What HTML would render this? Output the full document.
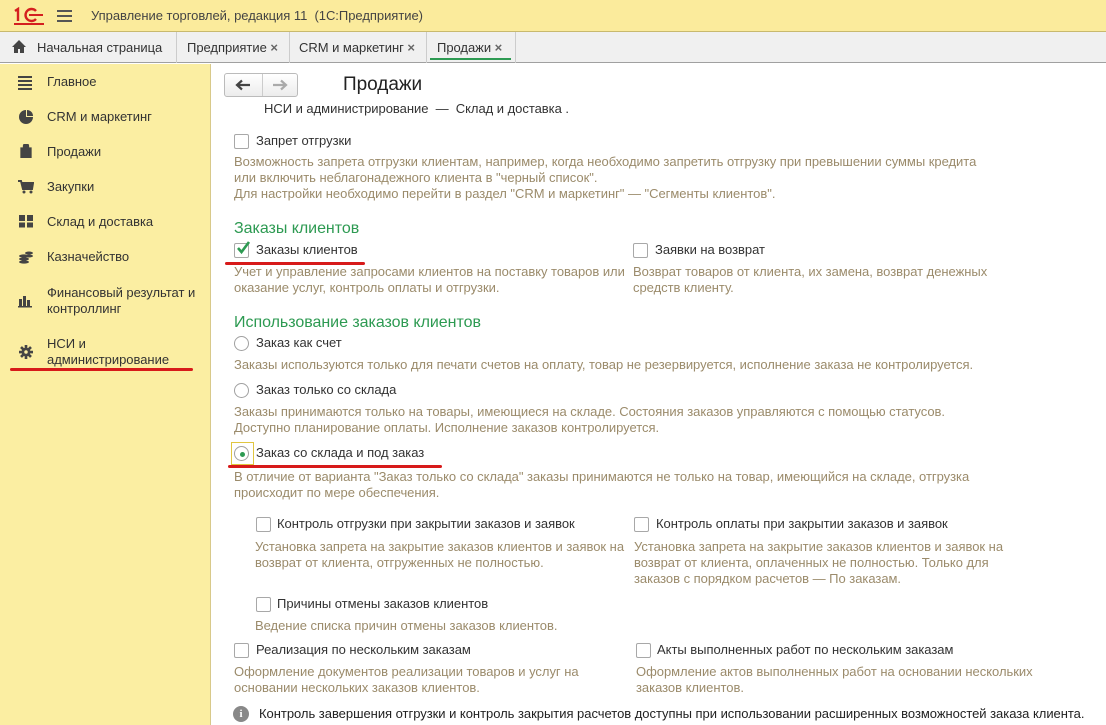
<!DOCTYPE html>
<html><head><meta charset="utf-8"><style>
*{margin:0;padding:0;box-sizing:border-box}
body{width:1106px;height:725px;overflow:hidden;position:relative;font-family:"Liberation Sans",Arial,sans-serif;font-size:13px;color:#333;background:#fff}
.a{position:absolute;white-space:nowrap;line-height:16px;letter-spacing:-0.03px}
.d{color:#9b8b6b}
.h{color:#2d9a52;font-size:16px;line-height:18px}
.cb{position:absolute;width:15px;height:15px;border:1px solid #a8a8a8;border-radius:2px;background:#fff}
.rb{position:absolute;width:15px;height:15px;border:1px solid #a0a0a0;border-radius:50%;background:#fff}
.red{position:absolute;height:3px;background:#d71a1a;border-radius:2px}
.si{position:absolute;left:18px;width:16px;height:14px}
</style></head><body>
<div style="position:absolute;left:0;top:0;width:1106px;height:32px;background:#fbeb9c;border-bottom:1px solid #c8b96e"></div>
<svg style="position:absolute;left:13px;top:7px" width="32" height="20" viewBox="0 0 32 20"><path d="M2 4l3-2v12" fill="none" stroke="#d41f1f" stroke-width="2.4"/><path d="M23 4a6 6 0 1 0 0 8" fill="none" stroke="#d41f1f" stroke-width="2.4"/><path d="M16 8h14" stroke="#d41f1f" stroke-width="2"/><path d="M1 17h30" stroke="#d41f1f" stroke-width="2"/></svg>
<div style="position:absolute;left:57px;top:10px;width:15px;height:2px;background:#555;box-shadow:0 5px 0 #555,0 10px 0 #555"></div>
<div class="a" style="left:91px;top:8px;color:#444">Управление торговлей, редакция 11&nbsp; (1С:Предприятие)</div>
<div style="position:absolute;left:0;top:32px;width:1106px;height:31px;background:#f0f0f0;border-bottom:1px solid #a0a0a0"></div>
<svg style="position:absolute;left:12px;top:40px" width="14" height="13" viewBox="0 0 14 13"><path d="M7 0L0 7h2v6h4V9h2v4h4V7h2z" fill="#444"/></svg>
<div class="a" style="left:37px;top:40px">Начальная страница</div>
<div style="position:absolute;left:176px;top:32px;width:1px;height:31px;background:#ccc"></div>
<div class="a" style="left:187px;top:40px">Предприятие <b style="color:#666">×</b></div>
<div style="position:absolute;left:289px;top:32px;width:1px;height:31px;background:#ccc"></div>
<div class="a" style="left:299px;top:40px">CRM и маркетинг <b style="color:#666">×</b></div>
<div style="position:absolute;left:426px;top:32px;width:1px;height:31px;background:#ccc"></div>
<div class="a" style="left:437px;top:40px">Продажи <b style="color:#666">×</b></div>
<div style="position:absolute;left:430px;top:58px;width:81px;height:2px;background:#2d9a52"></div>
<div style="position:absolute;left:515px;top:32px;width:1px;height:31px;background:#ccc"></div>
<div style="position:absolute;left:0;top:64px;width:211px;height:661px;background:#fbeea2;border-right:1px solid #d8c98a"></div>
<div style="position:absolute;left:18px;top:76px;width:14px;height:2px;background:#444;box-shadow:0 4px 0 #444,0 8px 0 #444,0 12px 0 #444"></div>
<svg class="si" style="top:110px" viewBox="0 0 16 14"><path d="M8 7V0A7 7 0 1 0 15 7z M9 0v6h6A6 6 0 0 0 9 0z" fill="#444"/></svg>
<svg class="si" style="top:144px" viewBox="0 0 16 14"><path d="M3 4h10v10H3z M5.5 4V2a2.5 2.5 0 0 1 5 0v2" fill="#444" stroke="#444" stroke-width="1.3"/></svg>
<svg class="si" style="top:180px" viewBox="0 0 16 14"><path d="M0 1h3l2 8h9l1-6H4" fill="none" stroke="#444" stroke-width="2"/><path d="M4 3h11l-1 6H5z" fill="#444"/><circle cx="6" cy="12" r="1.5" fill="#444"/><circle cx="13" cy="12" r="1.5" fill="#444"/></svg>
<svg class="si" style="top:215px" viewBox="0 0 16 14"><path d="M1 0h6v6H1zM9 0h6v6H9zM1 7.5h6v5H1zM9 7.5h6v5H9z" fill="#444"/></svg>
<svg class="si" style="top:250px" viewBox="0 0 16 14"><ellipse cx="6" cy="12" rx="5" ry="1.6" fill="#444"/><ellipse cx="6" cy="9" rx="5" ry="1.6" fill="#444"/><ellipse cx="6" cy="6" rx="5" ry="1.6" fill="#444"/><ellipse cx="11" cy="3" rx="4" ry="1.5" fill="#444"/><ellipse cx="11" cy="6" rx="4" ry="1.5" fill="#444"/></svg>
<svg class="si" style="top:294px" viewBox="0 0 16 14"><path d="M1 5h3v7H1zM5 2h3v10H5zM9 6h3v6H9zM0 12h14v1.5H0z" fill="#444"/></svg>
<svg class="si" style="top:345px" viewBox="0 0 16 16"><circle cx="8" cy="8" r="5" fill="#444"/><path d="M8 0v16M0 8h16M2.3 2.3l11.4 11.4M13.7 2.3L2.3 13.7" stroke="#444" stroke-width="3"/><circle cx="8" cy="8" r="2" fill="#fbeea2"/></svg>
<div class="a" style="left:47px;top:74px">Главное</div>
<div class="a" style="left:47px;top:109px">CRM и маркетинг</div>
<div class="a" style="left:47px;top:144px">Продажи</div>
<div class="a" style="left:47px;top:179px">Закупки</div>
<div class="a" style="left:47px;top:214px">Склад и доставка</div>
<div class="a" style="left:47px;top:249px">Казначейство</div>
<div class="a" style="left:47px;top:285px">Финансовый результат и<br>контроллинг</div>
<div class="a" style="left:47px;top:336px">НСИ и<br>администрирование</div>
<div class="red" style="left:10px;top:368px;width:183px"></div>
<div style="position:absolute;left:224px;top:73px;width:74px;height:24px;border:1px solid #bbb;border-radius:3px;background:linear-gradient(#fff,#ececec)"></div>
<div style="position:absolute;left:262px;top:74px;width:1px;height:22px;background:#ccc"></div>
<svg style="position:absolute;left:235px;top:79px" width="16" height="12" viewBox="0 0 16 12"><path d="M15 6H3M7 1.5L2 6l5 4.5" fill="none" stroke="#444" stroke-width="2.2"/></svg>
<svg style="position:absolute;left:272px;top:79px" width="16" height="12" viewBox="0 0 16 12"><path d="M1 6h12M9 1.5L14 6l-5 4.5" fill="none" stroke="#aaa" stroke-width="2.2"/></svg>
<div class="a" style="left:343px;top:74px;font-size:19px;line-height:22px;color:#222">Продажи</div>
<div class="a" style="left:264px;top:101px;color:#333">НСИ и администрирование&nbsp; —&nbsp; Склад и доставка .</div>
<div style="position:absolute;left:212px;top:98px;width:894px;height:5px;background:#fff"></div>
<div class="cb" style="left:234px;top:134px"></div><div class="a" style="left:256px;top:133px">Запрет отгрузки</div>
<div class="a d" style="left:234px;top:154px">Возможность запрета отгрузки клиентам, например, когда необходимо запретить отгрузку при превышении суммы кредита<br>или включить неблагонадежного клиента в "черный список".<br>Для настройки необходимо перейти в раздел "CRM и маркетинг" — "Сегменты клиентов".</div>
<div class="a h" style="left:234px;top:220px">Заказы клиентов</div>
<div class="cb" style="left:234px;top:243px"></div>
<svg style="position:absolute;left:235px;top:240px" width="16" height="16" viewBox="0 0 16 16"><path d="M3 8l3.5 4L14 2" fill="none" stroke="#2d9a52" stroke-width="2.6"/></svg>
<div class="a" style="left:256px;top:242px">Заказы клиентов</div>
<div class="red" style="left:225px;top:262px;width:140px"></div>
<div class="cb" style="left:633px;top:243px"></div><div class="a" style="left:655px;top:242px">Заявки на возврат</div>
<div class="a d" style="left:234px;top:264px">Учет и управление запросами клиентов на поставку товаров или<br>оказание услуг, контроль оплаты и отгрузки.</div>
<div class="a d" style="left:633px;top:264px">Возврат товаров от клиента, их замена, возврат денежных<br>средств клиенту.</div>
<div class="a h" style="left:234px;top:314px">Использование заказов клиентов</div>
<div class="rb" style="left:234px;top:336px"></div><div class="a" style="left:256px;top:335px">Заказ как счет</div>
<div class="a d" style="left:234px;top:357px">Заказы используются только для печати счетов на оплату, товар не резервируется, исполнение заказа не контролируется.</div>
<div class="rb" style="left:234px;top:383px"></div><div class="a" style="left:256px;top:382px">Заказ только со склада</div>
<div class="a d" style="left:234px;top:404px">Заказы принимаются только на товары, имеющиеся на складе. Состояния заказов управляются с помощью статусов.<br>Доступно планирование оплаты. Исполнение заказов контролируется.</div>
<div style="position:absolute;left:231px;top:442px;width:23px;height:23px;border:1px solid #e0c640"></div>
<div class="rb" style="left:234px;top:446px"></div><div style="position:absolute;left:240px;top:452px;width:5px;height:5px;border-radius:50%;background:#2d9a52"></div>
<div class="a" style="left:256px;top:445px">Заказ со склада и под заказ</div>
<div class="red" style="left:228px;top:465px;width:214px"></div>
<div class="a d" style="left:234px;top:469px">В отличие от варианта "Заказ только со склада" заказы принимаются не только на товар, имеющийся на складе, отгрузка<br>происходит по мере обеспечения.</div>
<div class="cb" style="left:256px;top:517px"></div><div class="a" style="left:277px;top:516px">Контроль отгрузки при закрытии заказов и заявок</div>
<div class="a d" style="left:255px;top:539px">Установка запрета на закрытие заказов клиентов и заявок на<br>возврат от клиента, отгруженных не полностью.</div>
<div class="cb" style="left:634px;top:517px"></div><div class="a" style="left:656px;top:516px">Контроль оплаты при закрытии заказов и заявок</div>
<div class="a d" style="left:634px;top:539px">Установка запрета на закрытие заказов клиентов и заявок на<br>возврат от клиента, оплаченных не полностью. Только для<br>заказов с порядком расчетов — По заказам.</div>
<div class="cb" style="left:256px;top:597px"></div><div class="a" style="left:277px;top:596px">Причины отмены заказов клиентов</div>
<div class="a d" style="left:255px;top:618px">Ведение списка причин отмены заказов клиентов.</div>
<div class="cb" style="left:234px;top:643px"></div><div class="a" style="left:256px;top:642px">Реализация по нескольким заказам</div>
<div class="a d" style="left:234px;top:664px">Оформление документов реализации товаров и услуг на<br>основании нескольких заказов клиентов.</div>
<div class="cb" style="left:636px;top:643px"></div><div class="a" style="left:657px;top:642px">Акты выполненных работ по нескольким заказам</div>
<div class="a d" style="left:636px;top:664px">Оформление актов выполненных работ на основании нескольких<br>заказов клиентов.</div>
<div style="position:absolute;left:233px;top:706px;width:16px;height:16px;border-radius:50%;background:#888;color:#fff;font-size:11px;font-weight:bold;text-align:center;line-height:16px;font-family:'Liberation Serif',serif">i</div>
<div class="a" style="left:259px;top:706px;color:#222">Контроль завершения отгрузки и контроль закрытия расчетов доступны при использовании расширенных возможностей заказа клиента.</div>
</body></html>
